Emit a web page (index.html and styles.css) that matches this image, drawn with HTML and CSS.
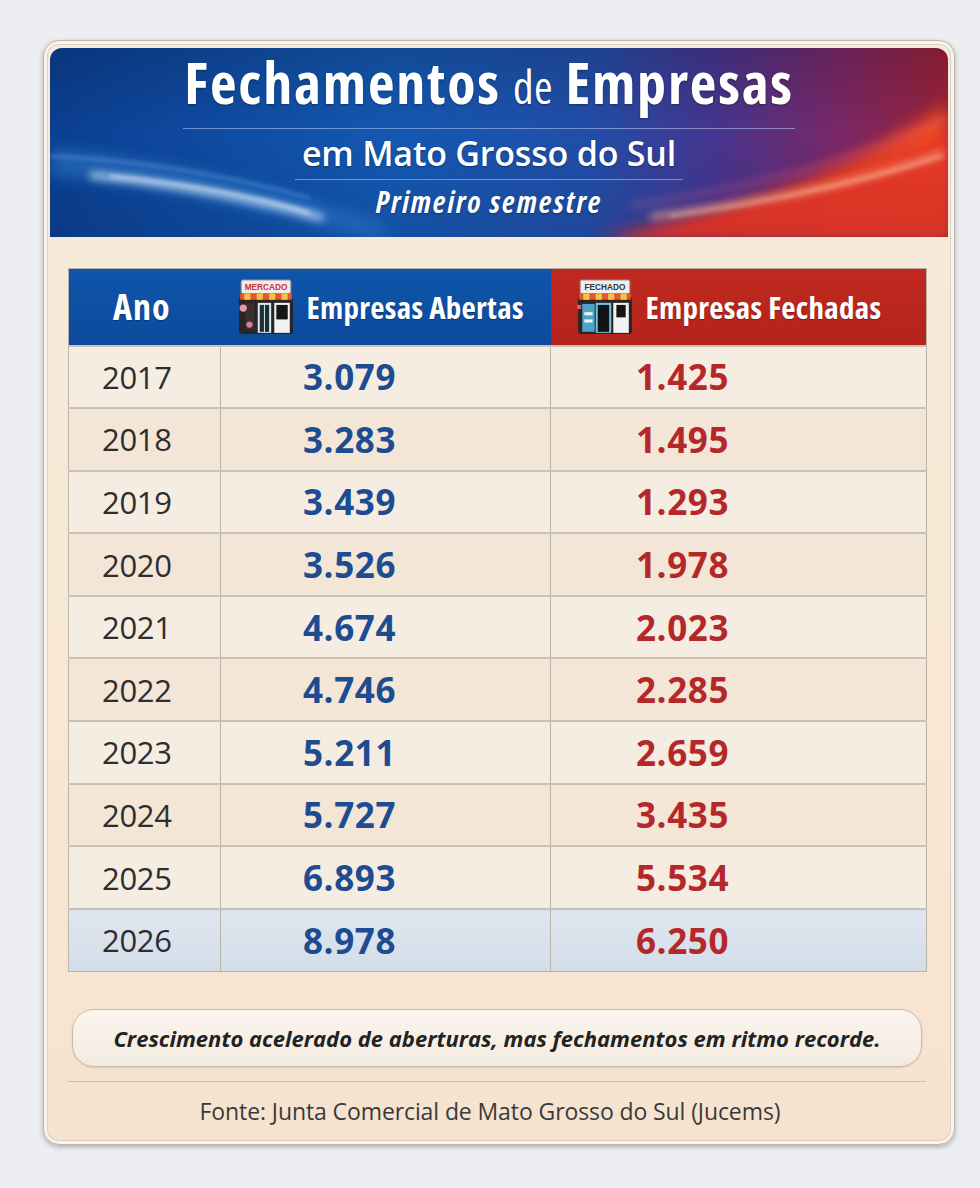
FILE: index.html
```html
<!DOCTYPE html>
<html lang="pt-BR">
<head>
<meta charset="utf-8">
<title>Fechamentos de Empresas em Mato Grosso do Sul</title>
<link rel="stylesheet" href="styles.css">
</head>
<body>
<div class="card">
  <header class="banner">
    <svg class="banner-bg" viewBox="0 0 898 189" preserveAspectRatio="none" aria-hidden="true">
      <defs>
        <linearGradient id="bg" x1="0" y1="0" x2="1" y2="0">
          <stop offset="0" stop-color="#0b3f92"/>
          <stop offset="0.38" stop-color="#1458b2"/>
          <stop offset="0.6" stop-color="#214ea8"/>
          <stop offset="0.74" stop-color="#46358f"/>
          <stop offset="0.88" stop-color="#7a2766"/>
          <stop offset="1" stop-color="#9a2238"/>
        </linearGradient>
        <linearGradient id="shade" x1="0" y1="0" x2="0" y2="1">
          <stop offset="0" stop-color="#000" stop-opacity="0.15"/>
          <stop offset="0.45" stop-color="#000" stop-opacity="0"/>
          <stop offset="1" stop-color="#000" stop-opacity="0.08"/>
        </linearGradient>
        <linearGradient id="warm" x1="0" y1="0" x2="1" y2="0">
          <stop offset="0" stop-color="#c92a4a"/>
          <stop offset="0.5" stop-color="#e0352a"/>
          <stop offset="1" stop-color="#ee4a24"/>
        </linearGradient>
        <filter id="blur8" x="-30%" y="-80%" width="160%" height="260%"><feGaussianBlur stdDeviation="8"/></filter>
        <filter id="blur4" x="-30%" y="-80%" width="160%" height="260%"><feGaussianBlur stdDeviation="4"/></filter>
        <filter id="blur2" x="-20%" y="-50%" width="140%" height="200%"><feGaussianBlur stdDeviation="2"/></filter>
      </defs>
      <rect width="898" height="189" fill="url(#bg)"/>
      <path d="M540 189 C660 170 790 130 898 55 L898 189 Z" fill="url(#warm)" filter="url(#blur8)"/>
      <path d="M560 189 C680 172 800 140 898 85 L898 189 Z" fill="#e8392a" opacity="0.9" filter="url(#blur4)"/>
      <rect width="898" height="189" fill="url(#shade)"/>
      <path d="M0 100 C110 110 220 140 340 180 L330 189 C210 160 100 135 0 128 Z" fill="#4aa2f0" opacity="0.35" filter="url(#blur8)"/>
      <path d="M40 127 C120 135 200 150 273 170" stroke="#dff1ff" stroke-width="6" fill="none" opacity="0.85" filter="url(#blur4)"/>
      <path d="M60 128 C140 136 210 150 260 165" stroke="#ffffff" stroke-width="2" fill="none" opacity="0.8" filter="url(#blur2)"/>
      <path d="M0 108 C90 112 180 128 260 150" stroke="#8cc8ff" stroke-width="2" fill="none" opacity="0.5" filter="url(#blur2)"/>
      <path d="M600 169 C710 155 810 135 893 105" stroke="#ffb48a" stroke-width="5" fill="none" opacity="0.85" filter="url(#blur4)"/>
      <path d="M620 168 C720 154 815 133 893 108" stroke="#ffe0c8" stroke-width="1.6" fill="none" opacity="0.75" filter="url(#blur2)"/>
      <path d="M580 158 C700 140 810 110 898 70" stroke="#ff6a8a" stroke-width="3" fill="none" opacity="0.5" filter="url(#blur4)"/>
    </svg>
    <h1 class="title"><b>Fechamentos</b> <span class="de">de</span> <b>Empresas</b></h1>
    <div class="rule rule-wide"></div>
    <h2 class="subtitle">em Mato Grosso do Sul</h2>
    <div class="rule rule-narrow"></div>
    <p class="period">Primeiro semestre</p>
  </header>

  <section class="content">
    <table class="data">
      <thead>
        <tr>
          <th class="c-year">Ano</th>
          <th class="c-open">
            <span class="th-inner">
              <svg class="store" viewBox="0 0 58 56" aria-hidden="true">
                <rect x="3" y="18" width="52" height="36" rx="2" fill="#2a2424"/>
                <rect x="5" y="2" width="48" height="13" rx="1.5" fill="#f1ece8" stroke="#9a9090" stroke-width="1"/>
                <text x="29" y="12" text-anchor="middle" class="sign-text" fill="#c8323a">MERCADO</text>
                <rect x="4" y="15" width="50" height="6" fill="#e4572b"/>
                <rect x="8" y="15" width="6" height="6" fill="#f7c244"/>
                <rect x="20" y="15" width="6" height="6" fill="#f7c244"/>
                <rect x="32" y="15" width="6" height="6" fill="#f7c244"/>
                <rect x="44" y="15" width="6" height="6" fill="#f7c244"/>
                <rect x="9" y="24" width="9" height="26" fill="#3b2e2e"/>
                <circle cx="7" cy="29" r="3.5" fill="#e59ab4"/>
                <circle cx="13" cy="45" r="3" fill="#e07aa4"/>
                <rect x="21" y="24" width="13" height="29" fill="#d9e6ea"/>
                <rect x="23" y="26" width="4" height="26" fill="#1b2e36"/>
                <rect x="28" y="26" width="4" height="26" fill="#1b2e36"/>
                <rect x="37" y="24" width="15" height="29" fill="#f2f2f2"/>
                <rect x="39" y="26" width="11" height="14" fill="#151515"/>
              </svg>
              Empresas Abertas
            </span>
          </th>
          <th class="c-closed">
            <span class="th-inner">
              <svg class="store" viewBox="0 0 58 56" aria-hidden="true">
                <rect x="3" y="18" width="52" height="36" rx="2" fill="#2a2424"/>
                <rect x="5" y="2" width="48" height="13" rx="1.5" fill="#eeeeee" stroke="#9a9090" stroke-width="1"/>
                <text x="29" y="12" text-anchor="middle" class="sign-text" fill="#333333">FECHADO</text>
                <rect x="4" y="15" width="50" height="6" fill="#e4572b"/>
                <rect x="8" y="15" width="6" height="6" fill="#f7c244"/>
                <rect x="20" y="15" width="6" height="6" fill="#f7c244"/>
                <rect x="32" y="15" width="6" height="6" fill="#f7c244"/>
                <rect x="44" y="15" width="6" height="6" fill="#f7c244"/>
                <rect x="7" y="25" width="12" height="27" fill="#4fa3c7"/>
                <rect x="9" y="33" width="8" height="3" fill="#e8f4f8"/>
                <rect x="9" y="40" width="8" height="3" fill="#e8f4f8"/>
                <rect x="2" y="26" width="4" height="4" fill="#e0577a"/>
                <rect x="20" y="24" width="15" height="29" fill="#6fc3e0"/>
                <rect x="22" y="26" width="11" height="26" fill="#121212"/>
                <rect x="37" y="24" width="15" height="29" fill="#f2f2f2"/>
                <rect x="40" y="26" width="9" height="12" fill="#151515"/>
              </svg>
              Empresas Fechadas
            </span>
          </th>
        </tr>
      </thead>
      <tbody>
        <tr><td class="year">2017</td><td class="num blue">3.079</td><td class="num red">1.425</td></tr>
        <tr><td class="year">2018</td><td class="num blue">3.283</td><td class="num red">1.495</td></tr>
        <tr><td class="year">2019</td><td class="num blue">3.439</td><td class="num red">1.293</td></tr>
        <tr><td class="year">2020</td><td class="num blue">3.526</td><td class="num red">1.978</td></tr>
        <tr><td class="year">2021</td><td class="num blue">4.674</td><td class="num red">2.023</td></tr>
        <tr><td class="year">2022</td><td class="num blue">4.746</td><td class="num red">2.285</td></tr>
        <tr><td class="year">2023</td><td class="num blue">5.211</td><td class="num red">2.659</td></tr>
        <tr><td class="year">2024</td><td class="num blue">5.727</td><td class="num red">3.435</td></tr>
        <tr><td class="year">2025</td><td class="num blue">6.893</td><td class="num red">5.534</td></tr>
        <tr class="highlight"><td class="year">2026</td><td class="num blue">8.978</td><td class="num red">6.250</td></tr>
      </tbody>
    </table>

    <div class="callout">Crescimento acelerado de aberturas, mas fechamentos em ritmo recorde.</div>
    <div class="separator"></div>
    <p class="source">Fonte: Junta Comercial de Mato Grosso do Sul (Jucems)</p>
  </section>
</div>
</body>
</html>
```

FILE: styles.css
```css
* { box-sizing: border-box; }

html, body {
  margin: 0;
  padding: 0;
}

body {
  background: #eceef1;
  padding: 40px 25px 0 43px;
  font-family: "Open Sans", "Liberation Sans", sans-serif;
  width: 980px;
  height: 1188px;
  overflow: hidden;
}

.card {
  width: 912px;
  height: 1105px;
  border: 1px solid #bdb6ae;
  border-radius: 16px;
  background: linear-gradient(180deg, #f8ebdc 0%, #f7e7d4 60%, #f6e3cf 100%);
  box-shadow: 0 2px 5px rgba(0, 0, 0, 0.28), inset 0 0 0 3px #fbf3ea, inset 0 0 0 4px #d9d0c6;
  padding: 7px 6px 0 6px;
  display: flex;
  flex-direction: column;
}

/* ---------- banner ---------- */
.banner {
  position: relative;
  height: 189px;
  display: flex;
  flex-direction: column;
  align-items: center;
  padding-right: 20px;
  color: #fff;
  text-shadow: 0 1px 2px rgba(0, 0, 0, 0.35);
}

.banner-bg {
  position: absolute;
  inset: 0;
  width: 100%;
  height: 100%;
  z-index: 0;
  border-radius: 12px 12px 0 0;
  overflow: hidden;
}

.banner > *:not(.banner-bg) {
  position: relative;
  z-index: 1;
}

.title {
  margin: 0;
  font-size: 58px;
  line-height: 68px;
  font-weight: 700;
  letter-spacing: 1.8px;
  font-stretch: 75%;
  white-space: nowrap;
}

.title b { font-weight: 700; }

.title .de {
  font-weight: 400;
  font-size: 45px;
  letter-spacing: 0.5px;
}

.rule {
  height: 1px;
  background: rgba(200, 220, 255, 0.5);
}

.rule-wide { width: 612px; margin-top: 7px; }
.rule-narrow { width: 388px; margin-top: 5px; }

.subtitle {
  margin: 3px 0 0;
  font-size: 34px;
  line-height: 42px;
  font-weight: 600;
  letter-spacing: -0.2px;
}

.period {
  margin: 5px 0 0;
  font-size: 30px;
  line-height: 34px;
  font-weight: 700;
  font-style: italic;
  font-stretch: 75%;
  letter-spacing: 1.9px;
}

/* ---------- content ---------- */
.content {
  padding: 31px 22px 0 18px;
  display: flex;
  flex-direction: column;
}

.data {
  width: 858px;
  border-collapse: collapse;
  table-layout: fixed;
  border: 1px solid #b9b2a9;
}

.data th {
  height: 77px;
  color: #fff;
  font-stretch: 75%;
  font-weight: 700;
  font-size: 31px;
  letter-spacing: 0.3px;
  text-align: left;
  padding: 0;
  text-shadow: 0 1px 1px rgba(0, 0, 0, 0.3);
}

.c-year {
  width: 152px;
  background: linear-gradient(180deg, #0f55aa, #0b4a9c);
  text-align: center !important;
  padding-right: 6px !important;
  font-size: 36px !important;
  letter-spacing: 1px !important;
}

.c-open {
  width: 330px;
  background: linear-gradient(180deg, #0f55aa, #0b4a9c);
}

.c-closed {
  width: 376px;
  background: linear-gradient(180deg, #c0291f, #b3231c);
}

.th-inner {
  display: flex;
  align-items: center;
  gap: 11px;
}

.c-open .th-inner { padding-left: 15px; }
.c-closed .th-inner { padding-left: 24px; }

.store {
  width: 60px;
  height: 58px;
  flex: none;
}

.sign-text {
  font-family: "Liberation Sans", sans-serif;
  font-size: 8px;
  font-weight: 700;
  letter-spacing: 0;
  text-shadow: none;
}

.data td {
  height: 62.6px;
  padding: 0;
  border-top: 2px solid #c9c0b6;
  border-left: 1px solid #bab3aa;
  vertical-align: middle;
}

.data tbody tr:nth-child(odd) td { background: #f5ece2; }
.data tbody tr:nth-child(even) td { background: #f3e6d7; }
.data tbody tr.highlight td {
  background: linear-gradient(180deg, #dfe6ee, #d3dde9);
}

.year {
  font-size: 31px;
  font-weight: 400;
  color: #2e2e2e;
  padding-left: 33px !important;
  letter-spacing: -0.3px;
}

.num {
  font-size: 35px;
  font-weight: 700;
  letter-spacing: 0.6px;
}

.num.blue { color: #1d4c91; padding-left: 82px !important; }
.num.red { color: #b5282a; padding-left: 85px !important; }

.callout {
  margin: 37px 4px 0 4px;
  height: 58px;
  border: 1.5px solid #c4bcb2;
  border-radius: 22px;
  background: linear-gradient(180deg, #fbf5ee, #f4ebe0);
  box-shadow: 0 1px 2px rgba(0, 0, 0, 0.12);
  display: flex;
  align-items: center;
  justify-content: center;
  font-style: italic;
  font-weight: 700;
  font-size: 22px;
  letter-spacing: 0;
  color: #222;
}

.separator {
  margin-top: 14px;
  height: 1px;
  background: #c8bfb4;
}

.source {
  margin: 13px 0 0;
  padding-right: 14px;
  text-align: center;
  font-size: 23px;
  letter-spacing: -0.1px;
  color: #3a3a3a;
}
```
